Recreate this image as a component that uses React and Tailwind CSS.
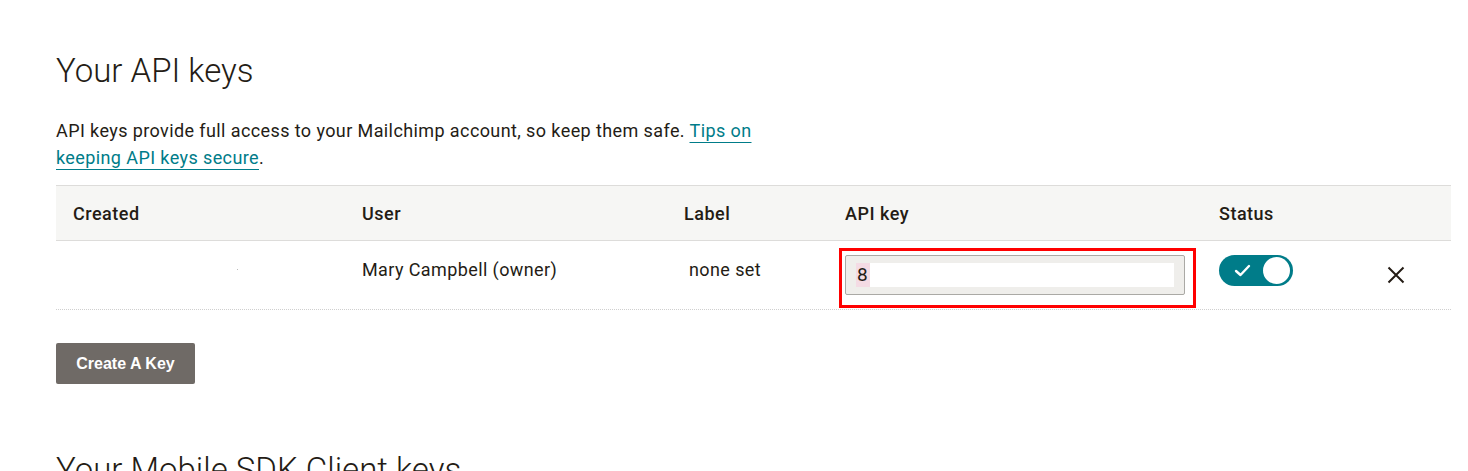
import React from "react";

const cols = "grid grid-cols-[289px_322px_161px_374px_1fr]";

function Toggle() {
  return (
    <div className="relative w-[74px] h-[31px] rounded-full bg-[#007c89]">
      <svg className="absolute left-[15px] top-[9px]" width="17" height="13" viewBox="0 0 17 13" fill="none">
        <path d="M2 7 L6.5 11 L15 2" stroke="white" strokeWidth="2.4" strokeLinecap="round" strokeLinejoin="round" />
      </svg>
      <div className="absolute right-[3px] top-[2px] w-[27px] h-[27px] rounded-full bg-white" />
    </div>
  );
}

function CloseIcon() {
  return (
    <svg width="18" height="18" viewBox="0 0 18 18" fill="none">
      <path d="M1.5 1.5 L16.5 16.5 M16.5 1.5 L1.5 16.5" stroke="#241c15" strokeWidth="2" />
    </svg>
  );
}

export default function App() {
  return (
    <div className="bg-white text-[#241c15] font-['Roboto',sans-serif] pl-[56px] pr-[17px] pt-[51px] overflow-hidden h-[471px]">
      <h1 className="text-[33px] font-light leading-[40px]">Your API keys</h1>

      <p className="mt-[26px] text-[18px] tracking-[0.4px] leading-[27px] w-[700px]">
        API keys provide full access to your Mailchimp account, so keep them safe.{" "}
        <a href="#" className="text-[#007c89] underline decoration-[#007c89] underline-offset-[5px]">
          Tips on keeping API keys secure
        </a>
        .
      </p>

      <div className="mt-[14px] w-[1395px]">
        <div className={`${cols} h-[56px] items-center bg-[#f6f6f4] border-y border-[#dddcda] text-[18px] tracking-[0.5px] font-medium`}>
          <div className="pl-[17px]">Created</div>
          <div className="pl-[17px]">User</div>
          <div className="pl-[17px]">Label</div>
          <div className="pl-[17px]">API key</div>
          <div className="pl-[17px]">Status</div>
        </div>

        <div className={`${cols} h-[69px] border-b border-dotted border-[#cfcfcf] text-[18px] tracking-[0.4px]`}>
          <div className="pl-[17px] relative">
            <span className="absolute left-[181px] top-[28px] w-[1px] h-[1px] bg-[#bbb]" />
          </div>
          <div className="pl-[17px] pt-[15px]">Mary Campbell (owner)</div>
          <div className="pl-[22px] pt-[15px]">none set</div>
          <div className="pl-[11px] pt-[7px]">
            <div className="w-[357px] h-[60px] border-[3px] border-[#ff0000] pl-[3px] pr-[8px] pt-[4px]">
              <div className="h-[40px] border border-[#aaa9a5] rounded-[2px] bg-[#efeeeb] flex items-center pl-[10px] pr-[10px]">
                <span className="bg-[#f4dbe4] text-[#241c15] text-[19px] leading-[24px] pl-[1px] pr-[2px]">8</span>
                <div className="flex-1 h-[24px] bg-white" />
              </div>
            </div>
          </div>
          <div className="pl-[17px] pt-[14px] flex items-start">
            <Toggle />
            <div className="ml-[94px] mt-[11px]">
              <CloseIcon />
            </div>
          </div>
        </div>
      </div>

      <button className="mt-[33px] h-[41px] w-[139px] rounded-[2px] bg-[#6f6a66] text-white text-[16px] font-semibold font-['Liberation_Sans',sans-serif]">
        Create A Key
      </button>

      <h2 className="mt-[66px] text-[33px] font-light leading-[40px]">Your Mobile SDK Client keys</h2>
    </div>
  );
}
